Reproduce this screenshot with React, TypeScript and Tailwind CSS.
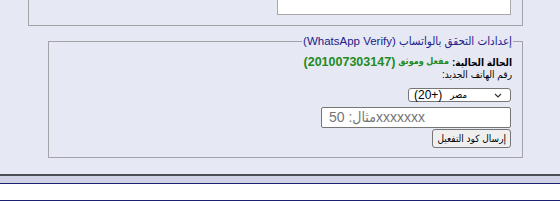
import React from "react";

const font = {
  fontFamily: '"Liberation Sans", "DejaVu Sans Condensed", "DejaVu Sans", sans-serif',
};

function Chevron() {
  return (
    <svg width="8" height="5" viewBox="0 0 8 5" className="shrink-0">
      <path d="M1 1 L4 4 L7 1" fill="none" stroke="#333" strokeWidth="1.2" />
    </svg>
  );
}

export default function App() {
  return (
    <div
      dir="rtl"
      className="flex h-[201px] w-[560px] flex-col overflow-hidden bg-[#e6e8f4] text-[10px] text-black"
      style={font}
    >
      {/* previous settings box, top clipped */}
      <div className="ml-[28px] mr-[37px] flex h-[26px] shrink-0 items-end border-x border-b border-[#a4a4a8] pb-[10px] pr-[11px]">
        <div className="h-[30px] w-[234px] shrink-0 border border-[#a9a9a9] bg-white" />
      </div>

      {/* WhatsApp verify */}
      <fieldset className="ml-[48px] mr-[37px] mt-[8px] shrink-0 border border-[#a4a4a8] px-[9px] pb-[9px]">
        <legend className="px-[1px] text-[11.5px] leading-[14px] text-[#22228a]">
          إعدادات التحقق بالواتساب (WhatsApp Verify)
        </legend>
        <div className="flex flex-col items-start">
          <div className="mr-[1px] mt-[7px] flex h-[14px] items-center gap-[3px] font-bold">
            <span className="text-[10px]">الحالة الحالية:</span>
            <span className="text-[9px] text-[#228b22]">مفعل وموثق</span>
            <span className="text-[12.5px] text-[#228b22]">(201007303147)</span>
          </div>
          <div className="mr-[1px] h-[12px] leading-[12px]">رقم الهاتف الجديد:</div>
          <div
            dir="ltr"
            className="mr-[2px] mt-[7px] flex h-[14px] w-[103px] items-center gap-[8px] rounded-[3px] border border-[#767676] bg-white pl-[5px] pr-[8px] leading-none"
          >
            <span className="text-[12px]">(20+)</span>
            <span className="text-[9.5px]">مصر</span>
            <span className="ml-auto flex">
              <Chevron />
            </span>
          </div>
          <input
            dir="ltr"
            placeholder="مثال: 50xxxxxxx"
            className="mr-[2px] mt-[5px] h-[21px] w-[190px] rounded-[2px] border border-[#767676] bg-white px-[7px] text-left text-[14px] placeholder:text-[#757575]"
            style={font}
          />
          <button className="mr-[2px] mt-[1px] h-[19px] rounded-[3px] border border-[#767676] bg-[#efefef] px-[4px] text-[10px] leading-none">
            إرسال كود التفعيل
          </button>
        </div>
      </fieldset>

      {/* footer bars */}
      <div className="mt-auto h-[2px] shrink-0 bg-[#4b4f56]" />
      <div className="h-[7px] shrink-0 bg-[#d2d4e6]" />
      <div className="h-[18px] shrink-0 border-y border-[#1c2070] bg-white" />
    </div>
  );
}
